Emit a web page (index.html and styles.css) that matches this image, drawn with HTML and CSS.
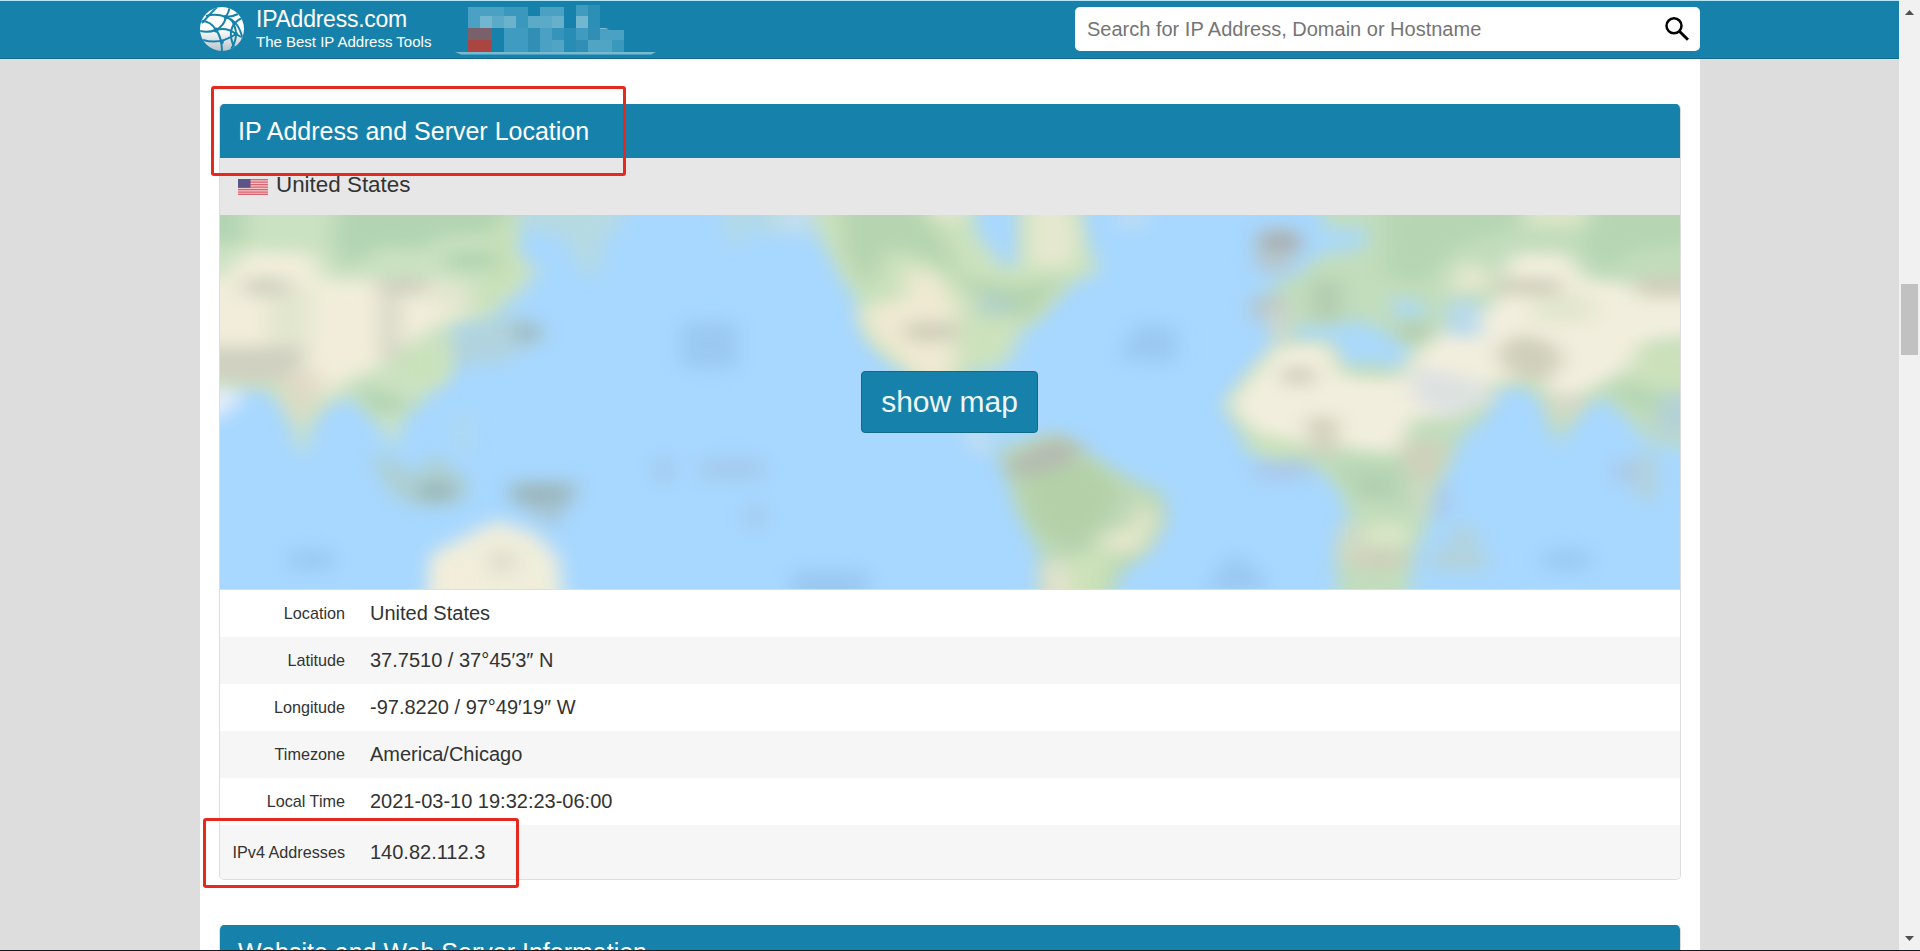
FILE: index.html
```html
<!DOCTYPE html>
<html lang="en">
<head>
<meta charset="utf-8">
<title>IPAddress.com</title>
<link rel="stylesheet" href="styles.css">
</head>
<body>
<div class="viewport">
  <div class="page">
    <header class="topbar">
      <div class="topbar-inner">
        <a class="brand">
          <svg class="globe" viewBox="0 0 44 44" width="44" height="44">
            <defs>
              <linearGradient id="ball" x1="0" y1="0" x2="0" y2="1"><stop offset=".5" stop-color="#fff"/><stop offset="1" stop-color="#b9c3c9"/></linearGradient>
              <clipPath id="disc"><circle cx="22" cy="22" r="22"/></clipPath>
            </defs>
            <circle cx="22" cy="22" r="22" fill="url(#ball)"/>
            <g clip-path="url(#disc)" fill="none" stroke="#1682ab" stroke-width="2">
              <path d="M6 9 Q16 6 26 10 Q33 13 37 18 Q41 24 43 33"/>
              <path d="M30 -1 Q29 5 26 10 Q24 19 16 23 Q8 26 0 24"/>
              <path d="M1 14 Q11 14 16 23 Q22 30 22 45"/>
              <path d="M17 0 Q11 6 2 16"/>
              <path d="M31 12 Q36 20 36 27 Q36 35 31 42"/>
              <path d="M42 11 Q33 15 31 24 Q30 32 35 42"/>
              <path d="M16 23 Q27 20 36 27 L41 30"/>
              <path d="M3 33 Q20 38 36 27"/>
              <path d="M26 10 Q32 10 38 7"/>
            </g>
            <g fill="#1682ab"><circle cx="26" cy="10" r="2.300"/><circle cx="16" cy="23" r="2.500"/><circle cx="36" cy="27" r="2"/><circle cx="22" cy="35" r="1.900"/></g>
          </svg>
          <span class="brand-text"><span class="brand-name">IPAddress.com</span><span class="brand-tag">The Best IP Address Tools</span></span>
        </a>
        <svg class="mosaic" viewBox="0 0 204 58" width="204" height="58">
          <g>
            <path fill="#4aa1c3" d="M13 7h36v9h-36z"/><path fill="#3a98bc" d="M49 7h24v9h-24z"/><path fill="#4aa1c3" d="M85 7h24v9h-24z"/><path fill="#3f9bbf" d="M121 5h12v11h-12z"/><path fill="#2c8fb6" d="M133 5h12v23h-12z"/>
            <path fill="#4aa1c3" d="M13 16h12v12h-12z"/><path fill="#73b6cf" d="M25 16h12v12h-12z"/><path fill="#5aaac8" d="M37 16h12v12h-12z"/><path fill="#6bb2cd" d="M49 16h12v12h-12z"/><path fill="#3a98bc" d="M61 16h12v12h-12z"/><path fill="#5aaac8" d="M73 16h24v12h-24z"/><path fill="#67b0cc" d="M97 16h12v12h-12z"/><path fill="#73b6cf" d="M121 16h12v12h-12z"/>
            <path fill="#7a606b" d="M13 28h24v12h-24z"/><path fill="#aa4542" d="M13 40h24v12h-24z"/>
            <path fill="#3f9bbf" d="M49 28h24v24h-24z"/><path fill="#318fb6" d="M73 28h12v24h-12z"/><path fill="#4aa1c3" d="M85 28h12v24h-12z"/><path fill="#3594ba" d="M97 28h12v12h-12z"/><path fill="#50a5c5" d="M97 40h12v12h-12z"/><path fill="#278db4" d="M109 28h12v24h-12z"/><path fill="#3f9bbf" d="M121 28h12v12h-12z"/><path fill="#318fb6" d="M121 40h12v12h-12zM133 28h12v12h-12z"/><path fill="#50a5c5" d="M133 40h24v12h-24z"/><path fill="#4aa1c3" d="M145 30h24v10h-24z"/><path fill="#3a98bc" d="M157 40h12v12h-12z"/>
            <path fill="#7bb9d1" d="M145 28h6l3 1.500h-9zM0 52h201l-5 2.500h-190z"/>
          </g>
        </svg>
        <div class="search">
          <span class="placeholder">Search for IP Address, Domain or Hostname</span>
          <svg class="lens" viewBox="0 0 24 24" width="24" height="24"><circle cx="9" cy="8.800" r="7.500" fill="none" stroke="#000" stroke-width="2.500"/><path d="M14.400 14.200L23 22.800" stroke="#000" stroke-width="3"/></svg>
        </div>
      </div>
    </header>
    <main class="content">
      <section class="card">
        <h2 class="card-title">IP Address and Server Location</h2>
        <div class="country">
          <svg class="flag" viewBox="0 0 30 16" width="30" height="16">
            <path fill="#f3c4c9" d="M0 0h30v16H0z"/>
            <path stroke="#d9646f" stroke-width="1.250" d="M0 .6h30M0 3.100h30M0 5.600h30M0 8.100h30M0 10.600h30M0 13.100h30M0 15.400h30"/>
            <path fill="#5b5487" d="M0 0h12.500v8.700H0z"/>
          </svg>
          <span>United States</span>
        </div>
        <div class="map">
          <svg class="map-art" viewBox="0 0 1460 374" width="1460" height="374">
            <defs>
              <filter id="soft" filterUnits="userSpaceOnUse" x="-60" y="-60" width="1580" height="494" color-interpolation-filters="sRGB"><feGaussianBlur stdDeviation="10 9"/></filter>
              <filter id="patch" filterUnits="userSpaceOnUse" x="-60" y="-60" width="1580" height="494" color-interpolation-filters="sRGB"><feGaussianBlur stdDeviation="11 8"/></filter>
            </defs>
            <path fill="#a8d8ff" d="M0 0h1460v374H0z"/>
            <g filter="url(#soft)">
              <!-- East Asia, Indonesia, Australia -->
              <g transform="translate(-10 -15) scale(.3827 .3333)">
                <path fill="#cbe2c2" d="M-160-160H800L800 170L860 200L810 280L720 360L630 370L630 530L560 600L510 640L478 750L430 650L370 590L330 600L275 650L240 780L200 630L140 565L-160 560z"/>
                <path fill="#e5edfa" d="M-120 560h190l10 50l-70 50h-130z"/>
                <path fill="#b6dae2" d="M800-120h290l-10 190l-50 40l-20 120l-40-10l-40-110l-130-30zM1340-120h80l-30 250h-40zM1420-120h180v220h-180z"/>
                <path fill="#b1d3df" d="M630 400L720 360L790 340L880 400L840 430L760 490L630 500z"/>
                <path fill="#aecfd0" d="M420 770L470 770L540 830L580 760L680 850L660 900L560 920L480 890z"/>
                <path fill="#b0d9ec" d="M640 640h40v120h-40z"/>
                <path fill="#a6c3cf" d="M780 845H970L900 980L860 950L790 900z"/>
                <path fill="#f0eedb" d="M560 1330L580 1060L680 1000L750 960L850 1000L910 1070L935 1330z"/>
                <path fill="#9ac8f1" d="M1230 365h150v140h-150zM205 1050h120v60h-120zM1520 1110h200v110h-200z"/>
                <path fill="#a5caed" d="M1160 770h50v80h-50zM1280 775h170v65h-170zM1400 915h50v70h-50z"/>
              </g>
              <!-- The Americas -->
              <g transform="translate(560 -15) scale(.3333)">
                <path fill="#cce2bd" d="M70-160H550L590 100L670 200L715 200L715-160H870L920 130L960 210L860 260L790 340L720 400L700 460L650 510L560 520L560 640L460 610L390 520L320 480L250 410L230 300L180 220L120 110z"/>
                <path fill="#c2deef" d="M0 0h90v100h-90zM1010 30h90v50h-90zM560 640l80 80l-20 50l-60-30z"/>
                <path fill="#bdd8b6" d="M650 750L720 730L830 700L930 770L1060 840L1150 880L1160 960L1100 1060L1010 1130L960 1340H780L790 1090L740 980L700 900L690 820z"/>
                <path fill="#9ac8f1" d="M1010 480L1070 370L1190 380V490zM50 1120h100v60h-100zM1270 1180l80-120l100 60v60z"/>
              </g>
              <!-- Europe, Africa, West and South Asia -->
              <g transform="translate(980 -15) scale(.3333)">
                <path fill="#c2ddbc" d="M340-160H1640V760L1350 730L1260 630L1210 590L1150 620L1070 740L1030 610L980 560H890L850 660L790 700L730 820L690 880L680 990L640 1050L610 1340H420L410 1060L450 960L420 860L330 790L220 770L140 730L70 620L150 510L240 430L200 270L300 220L380 140z"/>
                <path fill="#b6c7cd" d="M180 90h110l10 50l-50 90l-90-30zM150 290h110v70h-110z"/>
                <path fill="#aad9fa" d="M270 380L480 360L590 410L650 460L600 510L510 490L430 500L390 420L280 430zM560 300l90 0l40 50l-90 10zM350 85h160l-20 60l-130 20z"/>
                <path fill="#abc9e8" d="M160 780h170v60h-170zM700 860h50v90h-50zM1240 780h90v70h-90z"/>
                <path fill="#b4d2d8" d="M750 980h80v60h-80zM690 1050h170v60h-170zM1310 760h60v140h-60zM1360 580h240v130h-240z"/>
                <path fill="#9ac8f1" d="M1030 1050h140v60h-140zM10 1180l90-120l90 60v60z"/>
              </g>
            </g>
            <g filter="url(#patch)">
              <g transform="translate(-10 -15) scale(.3827 .3333)">
                <path fill="#b2d4b2" d="M-140-100H90V130H-140zM350-100H780V100L600 110L560 150L450 140L350 210L320 120zM620 150h130v60h-130zM380 550L450 570L540 620L430 650z"/>
                <path fill="#f1edda" d="M-150 240L20 240L100 150L270 160L300 240L620 240L690 330L600 370L520 430L440 500L360 540L300 590L180 530L-150 520z"/>
                <path fill="#e2e6ce" d="M150 260h110v180h-110zM590 250h90v80h-90z"/>
                <path fill="#cfd0c0" d="M90 235h110v50h-110zM440 235h130v50h-130zM-150 440H250L240 510L170 550L-150 530zM450 290h40v190h-40z"/>
                <path fill="#e0d9c5" d="M180 520h120l-20 80l-50 80z"/>
                <path fill="#c6dfb2" d="M690 340L790 220L780 60H740L750 180z"/>
                <path fill="#c9e2bb" d="M500 440h110v100h-110z"/>
                <path fill="#94b2b8" d="M805 370h45v55h-45zM555 850h75v50h-75zM800 865h130v35h-130z"/>
                <path fill="#dbd8cb" d="M740 1050h50v70h-50z"/>
                <path fill="#f2edda" d="M600 1080h110v220h-110z"/>
              </g>
              <g transform="translate(560 -15) scale(.3333)">
                <path fill="#b5d4b0" d="M170-110H320L500 130L540 230L720 260L860 230L740 370L570 270L460 180L330 140L260 280L190 160z"/>
                <path fill="#efe9d2" d="M380 200L480 230L530 320L540 400L520 500L490 590L380 500L290 420L240 330L380 290z"/>
                <path fill="#d0cfba" d="M380 365h150v60h-150z"/>
                <path fill="#e5e8cf" d="M450-110h80l20 170h-90zM750-110h90l50 230l-20 80h-120z"/>
                <path fill="#b2d1c7" d="M590 270l90 20l20 60h-100z"/>
                <path fill="#b4bbb1" d="M680 780L830 710L910 740L830 840L700 840z"/>
                <path fill="#b3d0a8" d="M720 830L930 780L1020 880L970 960L890 1060L760 970z"/>
                <path fill="#e2e6c9" d="M1080 890L1130 960L1080 1060L970 1060L950 1010L1060 970z"/>
                <path fill="#e4e2d0" d="M790 1080h60l80 230h-140z"/>
                <path fill="#cce2b8" d="M870 1060h130l-60 200h-70z"/>
              </g>
              <g transform="translate(980 -15) scale(.3333)">
                <path fill="#b5d5b3" d="M550-130H950V80L780 130L660 250L560 230zM1210-130H1600V120L1300 150L1200 220L1150 150zM1250 540L1360 570L1380 650L1260 600zM400 790H600L640 940L560 900L480 910z"/>
                <path fill="#f2eedd" d="M230 440L380 430L430 530L590 540L640 470L690 430L730 380L880 320L910 220L940 160L1100 160L1160 240L1600 280V400L1340 420L1290 500L1220 540L1120 590H1070L1000 540L900 540L830 600L760 660L640 650L590 760L430 740L330 740L150 690L90 610z"/>
                <path fill="#e3e7ce" d="M780 180L860 200L880 270L740 280zM1000 280h180v90h-180z"/>
                <path fill="#cfcfbb" d="M890 235h190v50h-190zM890 450L960 400L1060 430L1090 480L1040 550L920 520zM1310 230h290v60h-290zM250 500h90v55h-90zM610 720L740 730L700 850L620 830zM450 1050h160v55h-160zM320 650h90v120l-70-10z"/>
                <path fill="#dde2e1" d="M620 490L840 540L890 600L740 660L640 600z"/>
                <path fill="#b5d9ed" d="M740 300h100v110h-100z"/>
                <path fill="#b1cab0" d="M340 240h80v120h-80zM490 840h60v50h-60zM600 370h90v50h-90z"/>
                <path fill="#a4acb1" d="M190 100h100v50h-100z"/>
                <path fill="#d9d8c9" d="M220 310h40v120h-40zM1040 580h120l-70 100zM640 850h30v90h-30zM430 970h40v110h-40z"/>
                <path fill="#dbe6c6" d="M500 970h120v70h-120zM980-120h180v200h-180z"/>
                <path fill="#cbe1bb" d="M1300 440h300v120h-300zM150 710h130v50h-130z"/>
              </g>
            </g>
          </svg>
          <button class="show-map">show map</button>
        </div>
        <dl class="facts">
          <div class="fact"><dt>Location</dt><dd>United States</dd></div>
          <div class="fact"><dt>Latitude</dt><dd>37.7510 / 37°45′3″ N</dd></div>
          <div class="fact"><dt>Longitude</dt><dd>-97.8220 / 97°49′19″ W</dd></div>
          <div class="fact"><dt>Timezone</dt><dd>America/Chicago</dd></div>
          <div class="fact"><dt>Local Time</dt><dd>2021-03-10 19:32:23-06:00</dd></div>
          <div class="fact fact-last"><dt>IPv4 Addresses</dt><dd>140.82.112.3</dd></div>
        </dl>
      </section>
      <section class="card">
        <h2 class="card-title">Website and Web Server Information</h2>
      </section>
    </main>
  </div>
  <aside class="scrollbar">
    <svg viewBox="0 0 9 5" width="9" height="5"><path fill="#505050" d="M0 5L4.500 0L9 5z"/></svg>
    <div class="thumb"></div>
    <svg viewBox="0 0 9 5" width="9" height="5"><path fill="#505050" d="M0 0h9L4.500 5z"/></svg>
  </aside>
  <div class="mark mark-title"></div>
  <div class="mark mark-ip"></div>
</div>
</body>
</html>
```

FILE: styles.css
```css
* { box-sizing: border-box; }
body { margin: 0; font-family: "Liberation Sans", Arial, sans-serif; color: #333; }
.viewport { position: relative; display: flex; height: 951px; overflow: hidden; border-bottom: 1px solid #15181c; background: #ddd; }
.page { flex: 1; min-width: 0; }
.topbar { height: 59px; background: #1682ab; border-top: 1px solid #b5e6f5; border-bottom: 1px solid #14698b; }
.topbar-inner { display: flex; width: 1500px; margin-left: 200px; height: 57px; }
.brand { display: flex; gap: 12px; padding-top: 6px; width: 255px; color: #fff; }
.globe { flex: none; }
.brand-text { display: flex; flex-direction: column; white-space: nowrap; }
.brand-name { font-size: 23px; line-height: 25px; letter-spacing: -.25px; }
.brand-tag { font-size: 15px; line-height: 19px; }
.mosaic { margin-top: -1px; }
.search { display: flex; align-items: center; justify-content: space-between; width: 625px; height: 44px; margin: 6px 0 0 auto; padding: 0 11px 0 12px; background: #fff; border-radius: 5px; }
.placeholder { font-size: 20px; line-height: 24px; color: #757575; }
.content { width: 1500px; height: 892px; margin-left: 200px; padding: 45px 19px 0; background: #fff; }
.card { width: 1462px; margin-bottom: 45px; border: 1px solid #ddd; border-top: 0; border-radius: 5px; overflow: hidden; }
.card-title { margin: 0; height: 54px; padding: 0 18px; font-size: 25px; font-weight: 400; line-height: 54px; color: #fff; background: #1682ab; }
.country { display: flex; align-items: center; gap: 8px; height: 57px; padding: 0 18px 3px; font-size: 22.4px; background: #e7e7e7; }
.flag { margin-top: 3px; }
.map { display: grid; height: 375px; border-bottom: 1px solid #ddd; }
.map-art { grid-area: 1 / 1; }
.show-map { grid-area: 1 / 1; place-self: center; z-index: 1; width: 177px; height: 62px; margin-right: 1px; padding: 0; border: 1px solid #14698b; border-radius: 4px; background: #1682ab; color: #eef6fa; font-family: inherit; font-size: 30px; }
.facts { margin: 0; }
.fact { display: flex; align-items: center; gap: 25px; height: 47px; }
.fact:nth-child(even) { background: #f6f6f6; }
.fact-last { height: 54px; }
.fact dt { width: 125px; text-align: right; font-size: 16.2px; white-space: nowrap; }
.fact dd { margin: 0; font-size: 20px; }
.scrollbar { display: flex; flex-direction: column; align-items: center; width: 21px; padding: 10px 0 9px; background: #f1f1f1; }
.thumb { width: 17px; height: 71px; margin: 269px 0 auto; background: #c1c1c1; }
.mark { position: absolute; border: 3px solid #e6291f; border-radius: 3px; }
.mark-title { left: 211px; top: 86px; width: 415px; height: 90px; }
.mark-ip { left: 203px; top: 818px; width: 316px; height: 70px; }
```
